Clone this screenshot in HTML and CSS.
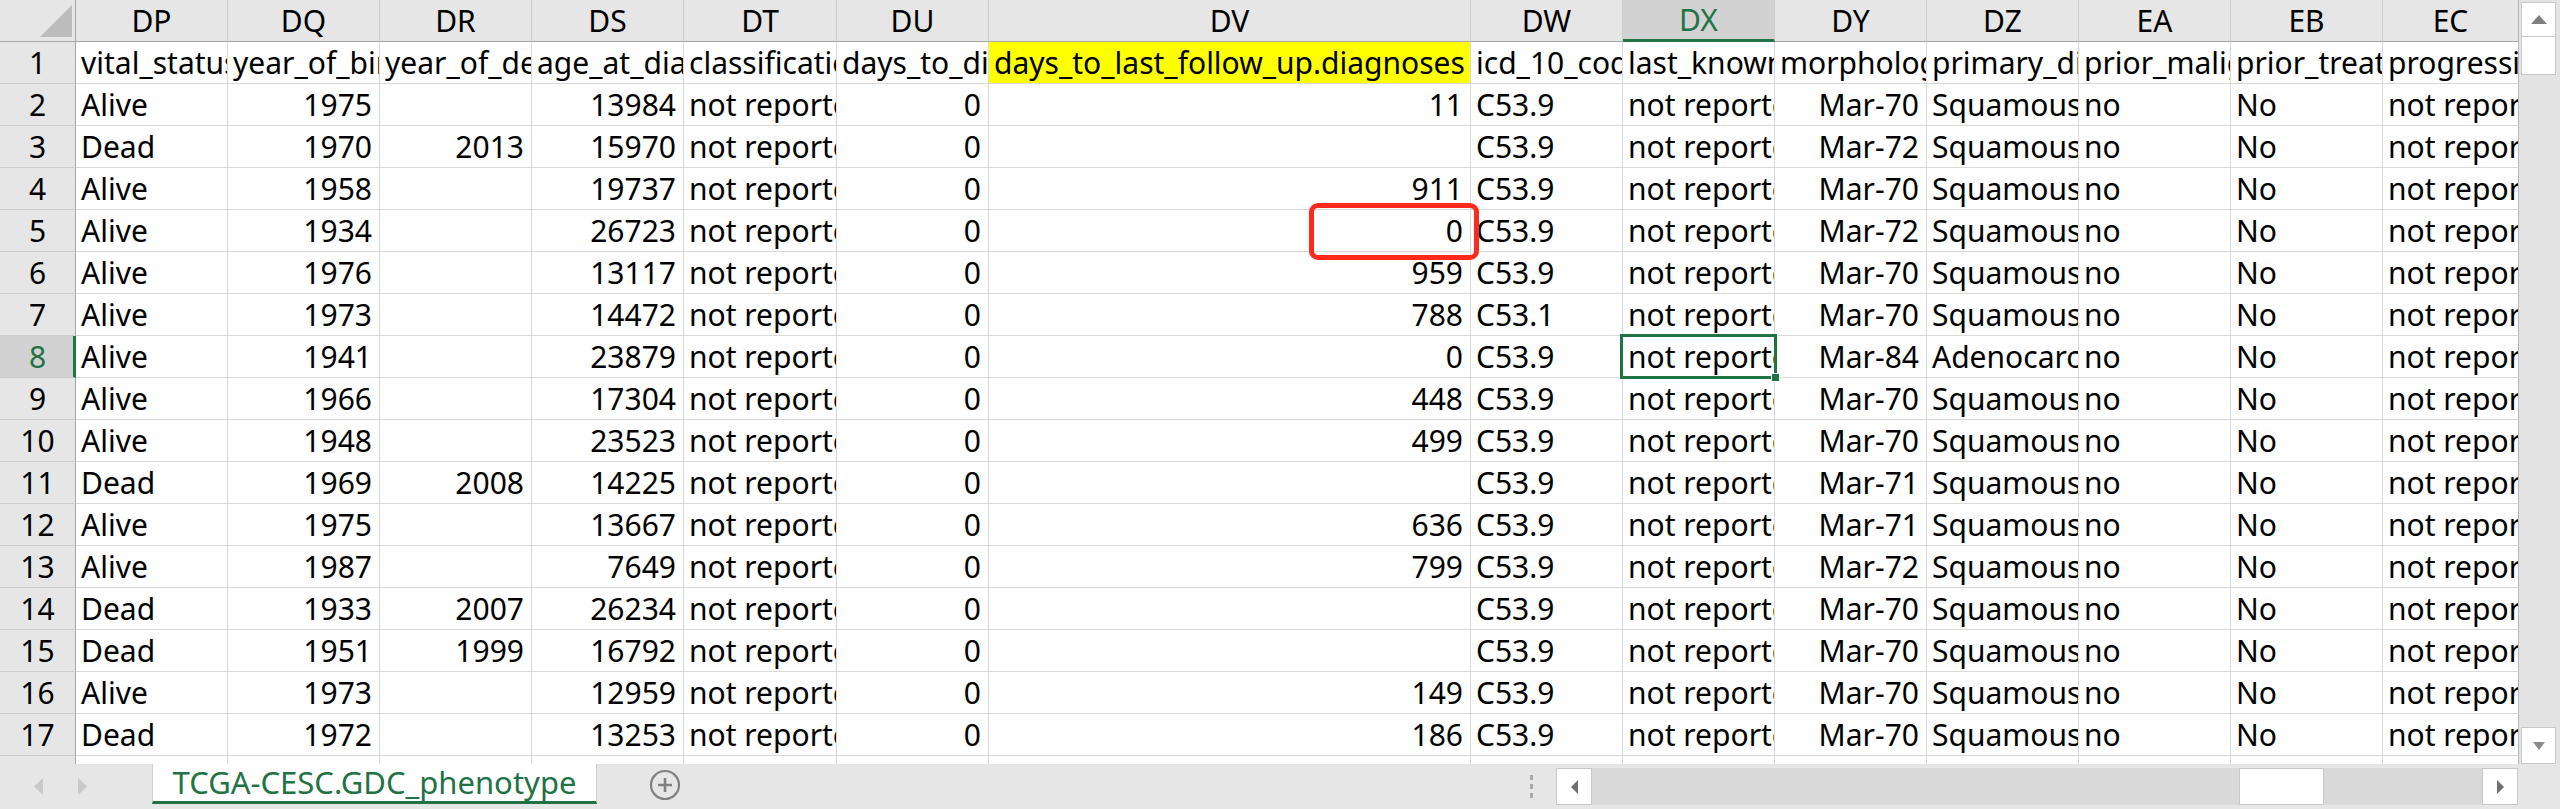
FILE: index.html
```html
<!DOCTYPE html>
<html lang="en">
<head>
<meta charset="utf-8">
<title>TCGA-CESC.GDC_phenotype</title>
<link rel="stylesheet" href="styles.css">
</head>
<body>
<div class="app">
  <div class="main">
    <div class="sheet">
      <div class="row head">
        <div class="corner"><span class="tri"></span></div>
        <div class="ch">DP</div><div class="ch">DQ</div><div class="ch">DR</div><div class="ch">DS</div><div class="ch">DT</div><div class="ch">DU</div><div class="ch">DV</div><div class="ch">DW</div><div class="ch sel">DX</div><div class="ch">DY</div><div class="ch">DZ</div><div class="ch">EA</div><div class="ch">EB</div><div class="ch">EC</div>
      </div>
      <div class="row"><div class="rh">1</div><div class="c">vital_status</div><div class="c">year_of_birth</div><div class="c">year_of_death</div><div class="c">age_at_diagnosis</div><div class="c">classification_of_tumor</div><div class="c">days_to_diagnosis</div><div class="c hl">days_to_last_follow_up.diagnoses</div><div class="c">icd_10_code</div><div class="c">last_known_disease_status</div><div class="c">morphology</div><div class="c">primary_diagnosis</div><div class="c">prior_malignancy</div><div class="c">prior_treatment</div><div class="c">progression_or_recurrence</div></div>
      <div class="row"><div class="rh">2</div><div class="c">Alive</div><div class="c n">1975</div><div class="c"></div><div class="c n">13984</div><div class="c">not reported</div><div class="c n">0</div><div class="c n">11</div><div class="c">C53.9</div><div class="c">not reported</div><div class="c n">Mar-70</div><div class="c">Squamous cell carcinoma, NOS</div><div class="c">no</div><div class="c">No</div><div class="c">not reported</div></div>
      <div class="row"><div class="rh">3</div><div class="c">Dead</div><div class="c n">1970</div><div class="c n">2013</div><div class="c n">15970</div><div class="c">not reported</div><div class="c n">0</div><div class="c n"></div><div class="c">C53.9</div><div class="c">not reported</div><div class="c n">Mar-72</div><div class="c">Squamous cell carcinoma, NOS</div><div class="c">no</div><div class="c">No</div><div class="c">not reported</div></div>
      <div class="row"><div class="rh">4</div><div class="c">Alive</div><div class="c n">1958</div><div class="c"></div><div class="c n">19737</div><div class="c">not reported</div><div class="c n">0</div><div class="c n">911</div><div class="c">C53.9</div><div class="c">not reported</div><div class="c n">Mar-70</div><div class="c">Squamous cell carcinoma, NOS</div><div class="c">no</div><div class="c">No</div><div class="c">not reported</div></div>
      <div class="row"><div class="rh">5</div><div class="c">Alive</div><div class="c n">1934</div><div class="c"></div><div class="c n">26723</div><div class="c">not reported</div><div class="c n">0</div><div class="c n">0</div><div class="c">C53.9</div><div class="c">not reported</div><div class="c n">Mar-72</div><div class="c">Squamous cell carcinoma, NOS</div><div class="c">no</div><div class="c">No</div><div class="c">not reported</div></div>
      <div class="row"><div class="rh">6</div><div class="c">Alive</div><div class="c n">1976</div><div class="c"></div><div class="c n">13117</div><div class="c">not reported</div><div class="c n">0</div><div class="c n">959</div><div class="c">C53.9</div><div class="c">not reported</div><div class="c n">Mar-70</div><div class="c">Squamous cell carcinoma, NOS</div><div class="c">no</div><div class="c">No</div><div class="c">not reported</div></div>
      <div class="row"><div class="rh">7</div><div class="c">Alive</div><div class="c n">1973</div><div class="c"></div><div class="c n">14472</div><div class="c">not reported</div><div class="c n">0</div><div class="c n">788</div><div class="c">C53.1</div><div class="c">not reported</div><div class="c n">Mar-70</div><div class="c">Squamous cell carcinoma, NOS</div><div class="c">no</div><div class="c">No</div><div class="c">not reported</div></div>
      <div class="row"><div class="rh sel">8</div><div class="c">Alive</div><div class="c n">1941</div><div class="c"></div><div class="c n">23879</div><div class="c">not reported</div><div class="c n">0</div><div class="c n">0</div><div class="c">C53.9</div><div class="c">not reported</div><div class="c n">Mar-84</div><div class="c">Adenocarcinoma, NOS</div><div class="c">no</div><div class="c">No</div><div class="c">not reported</div></div>
      <div class="row"><div class="rh">9</div><div class="c">Alive</div><div class="c n">1966</div><div class="c"></div><div class="c n">17304</div><div class="c">not reported</div><div class="c n">0</div><div class="c n">448</div><div class="c">C53.9</div><div class="c">not reported</div><div class="c n">Mar-70</div><div class="c">Squamous cell carcinoma, NOS</div><div class="c">no</div><div class="c">No</div><div class="c">not reported</div></div>
      <div class="row"><div class="rh">10</div><div class="c">Alive</div><div class="c n">1948</div><div class="c"></div><div class="c n">23523</div><div class="c">not reported</div><div class="c n">0</div><div class="c n">499</div><div class="c">C53.9</div><div class="c">not reported</div><div class="c n">Mar-70</div><div class="c">Squamous cell carcinoma, NOS</div><div class="c">no</div><div class="c">No</div><div class="c">not reported</div></div>
      <div class="row"><div class="rh">11</div><div class="c">Dead</div><div class="c n">1969</div><div class="c n">2008</div><div class="c n">14225</div><div class="c">not reported</div><div class="c n">0</div><div class="c n"></div><div class="c">C53.9</div><div class="c">not reported</div><div class="c n">Mar-71</div><div class="c">Squamous cell carcinoma, NOS</div><div class="c">no</div><div class="c">No</div><div class="c">not reported</div></div>
      <div class="row"><div class="rh">12</div><div class="c">Alive</div><div class="c n">1975</div><div class="c"></div><div class="c n">13667</div><div class="c">not reported</div><div class="c n">0</div><div class="c n">636</div><div class="c">C53.9</div><div class="c">not reported</div><div class="c n">Mar-71</div><div class="c">Squamous cell carcinoma, NOS</div><div class="c">no</div><div class="c">No</div><div class="c">not reported</div></div>
      <div class="row"><div class="rh">13</div><div class="c">Alive</div><div class="c n">1987</div><div class="c"></div><div class="c n">7649</div><div class="c">not reported</div><div class="c n">0</div><div class="c n">799</div><div class="c">C53.9</div><div class="c">not reported</div><div class="c n">Mar-72</div><div class="c">Squamous cell carcinoma, NOS</div><div class="c">no</div><div class="c">No</div><div class="c">not reported</div></div>
      <div class="row"><div class="rh">14</div><div class="c">Dead</div><div class="c n">1933</div><div class="c n">2007</div><div class="c n">26234</div><div class="c">not reported</div><div class="c n">0</div><div class="c n"></div><div class="c">C53.9</div><div class="c">not reported</div><div class="c n">Mar-70</div><div class="c">Squamous cell carcinoma, NOS</div><div class="c">no</div><div class="c">No</div><div class="c">not reported</div></div>
      <div class="row"><div class="rh">15</div><div class="c">Dead</div><div class="c n">1951</div><div class="c n">1999</div><div class="c n">16792</div><div class="c">not reported</div><div class="c n">0</div><div class="c n"></div><div class="c">C53.9</div><div class="c">not reported</div><div class="c n">Mar-70</div><div class="c">Squamous cell carcinoma, NOS</div><div class="c">no</div><div class="c">No</div><div class="c">not reported</div></div>
      <div class="row"><div class="rh">16</div><div class="c">Alive</div><div class="c n">1973</div><div class="c"></div><div class="c n">12959</div><div class="c">not reported</div><div class="c n">0</div><div class="c n">149</div><div class="c">C53.9</div><div class="c">not reported</div><div class="c n">Mar-70</div><div class="c">Squamous cell carcinoma, NOS</div><div class="c">no</div><div class="c">No</div><div class="c">not reported</div></div>
      <div class="row"><div class="rh">17</div><div class="c">Dead</div><div class="c n">1972</div><div class="c"></div><div class="c n">13253</div><div class="c">not reported</div><div class="c n">0</div><div class="c n">186</div><div class="c">C53.9</div><div class="c">not reported</div><div class="c n">Mar-70</div><div class="c">Squamous cell carcinoma, NOS</div><div class="c">no</div><div class="c">No</div><div class="c">not reported</div></div>
      <div class="row"><div class="rh">18</div><div class="c"></div><div class="c"></div><div class="c"></div><div class="c"></div><div class="c"></div><div class="c"></div><div class="c"></div><div class="c"></div><div class="c"></div><div class="c"></div><div class="c"></div><div class="c"></div><div class="c"></div><div class="c"></div></div>

      <div class="selbox"><span class="handle"></span></div>
      <div class="mark"></div>
    </div>
    <div class="vscroll">
      <div class="vbtn"><svg width="16" height="9" viewBox="0 0 16 9"><path d="M0 9 L8 0 L16 9 Z" fill="#7f7f7f"/></svg></div>
      <div class="vthumb"></div>
      <div class="vtrack"></div>
      <div class="vbtn down"><svg width="12" height="8" viewBox="0 0 12 8"><path d="M0 0 L12 0 L6 8 Z" fill="#8a8a8a"/></svg></div>
    </div>
  </div>
  <div class="tabbar">
    <div class="nav">
      <svg width="9" height="17" viewBox="0 0 9 17"><path d="M9 0 L0 8.5 L9 17 Z" fill="#c9c9c9"/></svg>
      <svg width="9" height="17" viewBox="0 0 9 17"><path d="M0 0 L9 8.5 L0 17 Z" fill="#c9c9c9"/></svg>
    </div>
    <div class="tab">TCGA-CESC.GDC_phenotype</div>
    <div class="add">
      <svg width="32" height="32" viewBox="0 0 32 32"><circle cx="16" cy="16" r="14" fill="none" stroke="#808080" stroke-width="2.2"/><path d="M16 9 V23 M9 16 H23" stroke="#808080" stroke-width="2.6"/></svg>
    </div>
    <div class="spacer"></div>
    <div class="split"><i></i><i></i><i></i></div>
    <div class="hscroll">
      <div class="hbtn"><svg width="7" height="14" viewBox="0 0 7 14"><path d="M7 0 L0 7 L7 14 Z" fill="#6f6f6f"/></svg></div>
      <div class="hgap"></div>
      <div class="hthumb"></div>
      <div class="hrest"></div>
      <div class="hbtn"><svg width="7" height="14" viewBox="0 0 7 14"><path d="M0 0 L7 7 L0 14 Z" fill="#6f6f6f"/></svg></div>
    </div>
    <div class="cornerbr"></div>
  </div>
</div>
</body>
</html>
```
FILE: styles.css
```css
html, body {
  margin: 0;
  padding: 0;
  background: #e6e6e6;
}
body {
  width: 2560px;
  height: 809px;
  overflow: hidden;
  font-family: "Noto Sans", "Liberation Sans", Arial, sans-serif;
  font-size: 30px;
  color: #000;
}
.app {
  display: flex;
  flex-direction: column;
  width: 2560px;
  height: 809px;
}
.main {
  display: flex;
  height: 764px;
}
.sheet {
  position: relative;
  width: 2519px;
  height: 764px;
  overflow: hidden;
  background: #fff;
}
.row {
  display: grid;
  grid-template-columns: 76px 152px 152px 152px 152px 153px 152px 482px 152px 152px 152px 152px 152px 152px 136px;
  height: 42px;
}
.row > div {
  box-sizing: border-box;
  height: 42px;
  line-height: 41px;
  white-space: nowrap;
  overflow: hidden;
}
.c {
  border-right: 1px solid #d9d9d9;
  border-bottom: 1px solid #d9d9d9;
  padding: 0 7px 0 5px;
}
.row > div:last-child {
  border-right: 1px solid #b8b8b8;
}
.n { text-align: right; }
.hl { background: #ffff00; }
.head > div {
  background: #e6e6e6;
  border-bottom: 1px solid #a6a6a6;
}
.ch {
  text-align: center;
  border-right: 1px solid #cdcdcd;
}
.ch.sel {
  background: #d2d2d2;
  color: #217346;
  border-bottom: 3px solid #217346;
  line-height: 39px;
}
.corner {
  position: relative;
  border-right: 1px solid #a6a6a6;
}
.tri {
  position: absolute;
  right: 3px;
  bottom: 4px;
  width: 0;
  height: 0;
  border-left: 32px solid transparent;
  border-bottom: 32px solid #bcbcbc;
}
.rh {
  background: #e6e6e6;
  text-align: center;
  border-right: 1px solid #a6a6a6;
  border-bottom: 1px solid #cbcbcb;
}
.rh.sel {
  background: #d2d2d2;
  color: #217346;
  border-right: 3px solid #217346;
  padding-left: 2px;
}
.selbox {
  position: absolute;
  left: 1620px;
  top: 334px;
  width: 157px;
  height: 45px;
  box-sizing: border-box;
  border: 3px solid #217346;
}
.handle {
  position: absolute;
  right: -6px;
  bottom: -6px;
  width: 7px;
  height: 7px;
  background: #217346;
  border: 1px solid #fff;
}
.mark {
  position: absolute;
  left: 1309px;
  top: 203px;
  width: 170px;
  height: 57px;
  box-sizing: border-box;
  border: 5px solid #ff2a1c;
  border-radius: 9px;
}
.vscroll {
  width: 41px;
  height: 764px;
  display: flex;
  flex-direction: column;
  align-items: flex-start;
  padding: 2px 0 0 2px;
  box-sizing: border-box;
  background: #e3e3e3;
}
.vbtn {
  width: 35px;
  height: 35px;
  box-sizing: border-box;
  background: #fff;
  border: 1px solid #c8c8c8;
  display: flex;
  align-items: center;
  justify-content: center;
}
.vbtn.down {
  height: 37px;
}
.vthumb {
  width: 35px;
  height: 38px;
  box-sizing: border-box;
  background: #fff;
  border: 1px solid #c8c8c8;
  border-top: none;
}
.vtrack {
  flex: 1;
}
.tabbar {
  display: flex;
  height: 45px;
  background: #e6e6e6;
}
.nav {
  width: 152px;
  height: 44px;
  display: flex;
  align-items: center;
  gap: 35px;
  padding-left: 34px;
  box-sizing: border-box;
}
.tab {
  width: 445px;
  height: 40px;
  box-sizing: border-box;
  background: #fff;
  border-bottom: 3px solid #217346;
  border-left: 1px solid #cfcfcf;
  border-right: 1px solid #cfcfcf;
  color: #217346;
  font-size: 31px;
  text-align: center;
  line-height: 37px;
  white-space: nowrap;
}
.add {
  margin-left: 52px;
  padding-top: 5px;
}
.spacer {
  flex: 1;
}
.split {
  width: 4px;
  display: flex;
  flex-direction: column;
  gap: 4px;
  padding-top: 11px;
  margin-right: 22px;
}
.split i {
  display: block;
  width: 3px;
  height: 5px;
  background: #a9a9a9;
}
.hscroll {
  width: 962px;
  height: 37px;
  margin-top: 4px;
  display: flex;
  background: #d9d9d9;
}
.hbtn {
  width: 36px;
  height: 37px;
  box-sizing: border-box;
  background: #fff;
  border: 1px solid #c8c8c8;
  display: flex;
  align-items: center;
  justify-content: center;
}
.hgap {
  width: 647px;
}
.hthumb {
  width: 85px;
  height: 37px;
  box-sizing: border-box;
  background: #fff;
  border: 1px solid #c8c8c8;
}
.hrest {
  flex: 1;
}
.cornerbr {
  width: 42px;
}
```
